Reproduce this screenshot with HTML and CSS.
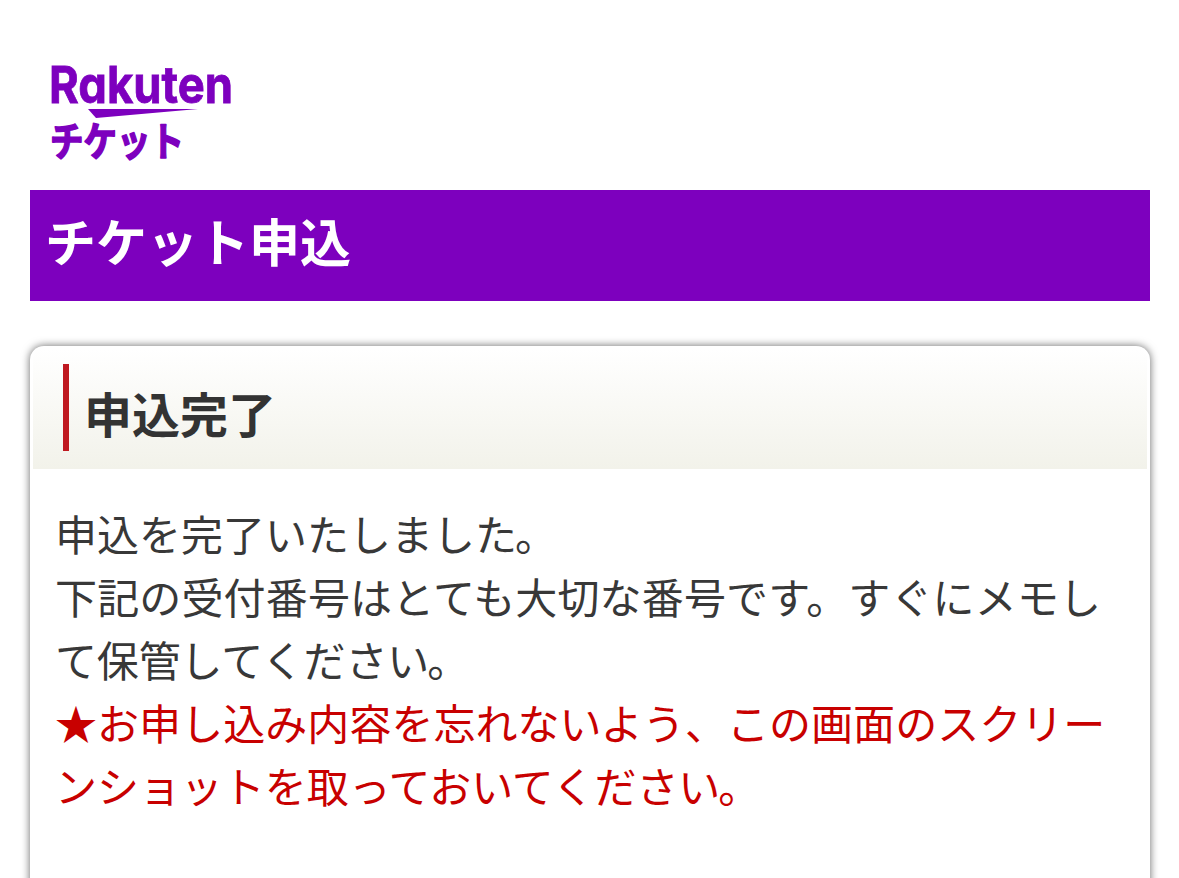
FILE: index.html
```
<!DOCTYPE html>
<html lang="ja">
<head>
<meta charset="utf-8">
<title>チケット申込</title>
<link rel="stylesheet" href="styles.css">
</head>
<body>
<header class="site-header">
  <svg class="logo" width="190" height="110" viewBox="0 0 190 110" role="img" aria-label="Rakuten チケット">
    <text class="logo-name" x="-2" y="48" textLength="184" lengthAdjust="spacingAndGlyphs">Rakuten</text>
    <path d="M37 54 L147 54 L45 63 Z"/>
    <text class="logo-service" x="-1" y="101" textLength="134" lengthAdjust="spacingAndGlyphs">チケット</text>
  </svg>
</header>
<h1 class="page-title">チケット申込</h1>
<main class="card">
  <div class="card-head">
    <h2 class="card-title">申込完了</h2>
  </div>
  <div class="card-body">
    <p>申込を完了いたしました<span class="stop">。</span><br><span class="wide">下記の受付番号はとても大切な番号です。すぐにメモし</span><br><span class="tight">て保管してください<span class="stop">。</span></span></p>
    <p class="notice">★お申し込み内容を忘れないよう、この画面のスクリー<br><span class="close">ンショットを取っておいてください<span class="stop">。</span></span></p>
  </div>
</main>
</body>
</html>
```
FILE: styles.css
```
* { box-sizing: border-box; }

html { overflow: hidden; }

body {
  height: 878px;
  margin: 0;
  padding: 0 29px 0 30px;
  overflow: hidden;
  background: #fff;
  color: #383838;
  font-family: "Noto Sans CJK JP", sans-serif;
}

.site-header {
  height: 190px;
  padding: 55px 0 0 21px;
}

.logo {
  display: block;
  overflow: visible;
  fill: #7d00be;
}

.logo-name {
  font: 700 51px Inter, sans-serif;
  font-feature-settings: "cv11" 1;
  stroke: #7d00be;
  stroke-width: 0.8;
}

.logo-service {
  font: 700 40px "Noto Sans CJK JP", sans-serif;
  stroke: #7d00be;
  stroke-width: 1.6;
  stroke-linejoin: round;
}

.page-title {
  height: 111px;
  margin: 0 0 45px;
  padding: 0 0 0 15px;
  background: #7d00be;
  color: #fff;
  font-size: 51px;
  font-weight: 700;
  line-height: 101px;
}

.card {
  height: 545px;
  padding: 3px;
  border-radius: 14px 14px 0 0;
  background: #fff;
  box-shadow: 0 0 9px rgba(0, 0, 0, 0.6);
}

.card-head {
  height: 120px;
  padding: 15px 30px 18px;
  border-radius: 10px 10px 0 0;
  background: linear-gradient(#fff, #f2f2ea);
}

.card-title {
  height: 87px;
  margin: 0;
  padding-left: 15px;
  border-left: 6px solid #bf1920;
  color: #333;
  font-size: 48px;
  font-weight: 700;
  line-height: 97px;
}

.card-body {
  padding: 32px 24px 0 22px;
  font-size: 42px;
  font-weight: 400;
  line-height: 63px;
  white-space: nowrap;
}

.card-body p { margin: 0; }

.card-body .notice {
  color: #c80000;
  letter-spacing: 0.05px;
}

.wide { letter-spacing: 0.15px; }

.tight { letter-spacing: -0.15px; }

.close { letter-spacing: -0.05px; }

.stop { margin-left: -2px; }
```
